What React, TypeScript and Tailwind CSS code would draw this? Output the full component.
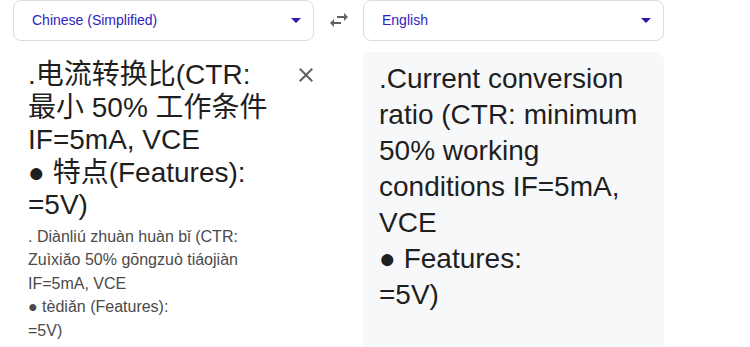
const sourceLines = ['.电流转换比(CTR:', '最小 50% 工作条件', 'IF=5mA, VCE', '● 特点(Features):', '=5V)']

const pinyinLines = [
  '. Diànliú zhuàn huàn bǐ (CTR:',
  'Zuìxiǎo 50% gōngzuò tiáojiàn',
  'IF=5mA, VCE',
  '● tèdiǎn (Features):',
  '=5V)',
]

const targetLines = [
  '.Current conversion',
  'ratio (CTR: minimum',
  '50% working',
  'conditions IF=5mA,',
  'VCE',
  '● Features:',
  '=5V)',
]

function LanguageSelect({ label }: { label: string }) {
  return (
    <div className="flex h-[41px] items-center justify-between rounded-lg border border-[#dadce0] bg-white pl-[18px] pr-[12px]">
      <span className="text-[14px] text-[#2f22c0]">{label}</span>
      <svg width="10" height="5" viewBox="7 10 10 5" className="shrink-0">
        <path d="M7 10l5 5 5-5z" fill="#2a1aa8" />
      </svg>
    </div>
  )
}

export default function App() {
  return (
    <div className="h-[347px] w-[750px] overflow-hidden bg-white font-['Liberation_Sans','Noto_Sans_CJK_SC',sans-serif]">
      <div className="flex pl-[13px]">
        <div className="w-[301px]">
          <LanguageSelect label="Chinese (Simplified)" />
          <div className="mt-[11px] flex justify-between pr-[1px]">
            <div className="pl-[15px] pt-[7px]">
              <div className="text-[28px] leading-[32.5px] text-[#1f1f1f] whitespace-nowrap">
                {sourceLines.map((line) => (
                  <div key={line}>{line}</div>
                ))}
              </div>
              <div className="mt-[3px] text-[16px] leading-[23.5px] text-[#4a4a4a] whitespace-nowrap">
                {pinyinLines.map((line) => (
                  <div key={line}>{line}</div>
                ))}
              </div>
            </div>
            <button className="mt-[16px] h-[14px] w-[14px] shrink-0" aria-label="Clear source text">
              <svg width="14" height="14" viewBox="5 5 14 14">
                <path
                  d="M19 6.41 17.59 5 12 10.59 6.41 5 5 6.41 10.59 12 5 17.59 6.41 19 12 13.41 17.59 19 19 17.59 13.41 12z"
                  fill="#5f6368"
                />
              </svg>
            </button>
          </div>
        </div>

        <div className="flex w-[49px] justify-center pt-[8px]">
          <svg width="24" height="24" viewBox="0 0 24 24">
            <path
              d="M6.99 11 3 15l3.99 4v-3H14v-2H6.99v-3zM21 9l-3.99-4v3H10v2h7.01v3L21 9z"
              fill="#5f6368"
            />
          </svg>
        </div>

        <div className="w-[301px]">
          <LanguageSelect label="English" />
          <div className="mt-[11px] h-[320px] rounded-lg bg-[#f7f8fa] pl-[16px] pt-[9px]">
            <div className="text-[28px] leading-[36px] text-[#1f1f1f] whitespace-nowrap">
              {targetLines.map((line) => (
                <div key={line}>{line}</div>
              ))}
            </div>
          </div>
        </div>
      </div>
    </div>
  )
}
